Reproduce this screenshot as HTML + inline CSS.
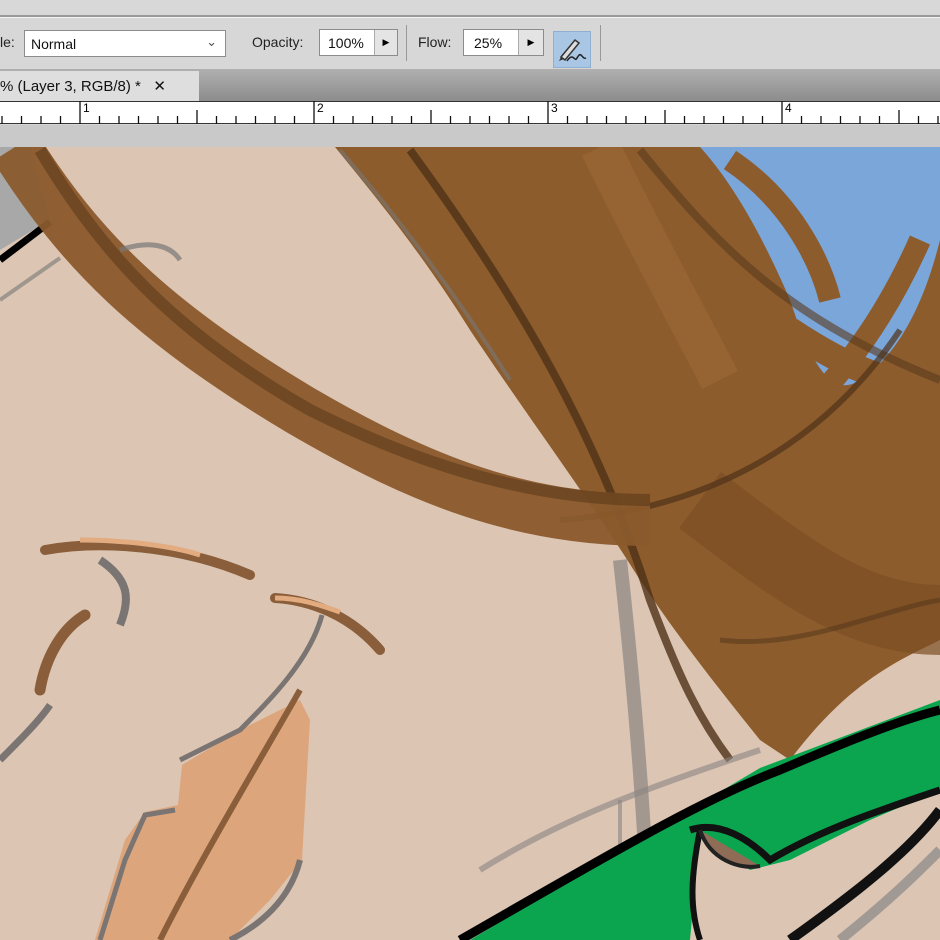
<!DOCTYPE html>
<html><head><meta charset="utf-8"><style>
*{margin:0;padding:0;box-sizing:border-box}
body{width:940px;height:940px;overflow:hidden;background:#d6d6d6;font-family:"Liberation Sans",sans-serif;position:relative}
.abs{position:absolute}
</style></head><body>
<div class="abs" style="left:0;top:0;width:940px;height:15px;background:#d8d8d8"></div>
<div class="abs" style="left:0;top:15px;width:940px;height:2px;background:#9a9a9a"></div>
<div class="abs" style="left:0;top:17px;width:940px;height:1px;background:#f2f2f2"></div>
<div class="abs" style="left:0;top:18px;width:940px;height:51px;background:#d7d7d7"></div>
<div class="abs" style="left:0;top:34px;font-size:14px;color:#222">le:</div>
<div class="abs" style="left:24px;top:30px;width:202px;height:27px;background:#fff;border:1px solid #8c8c8c;font-size:14px;color:#111;padding:5px 0 0 6px">Normal<span style="position:absolute;right:8px;top:3px;color:#555;font-size:13px">&#8964;</span></div>
<div class="abs" style="left:252px;top:34px;font-size:14px;color:#222">Opacity:</div>
<div class="abs" style="left:319px;top:29px;width:79px;height:27px;background:#fff;border:1px solid #8c8c8c;font-size:14px;color:#111;padding:5px 0 0 8px">100%</div>
<div class="abs" style="left:374px;top:30px;width:23px;height:25px;background:#e4e4e4;border-left:1px solid #aaa;font-size:9px;text-align:center;padding-top:7px">&#9654;</div>
<div class="abs" style="left:406px;top:25px;width:1px;height:36px;background:#999"></div>
<div class="abs" style="left:418px;top:34px;font-size:14px;color:#222">Flow:</div>
<div class="abs" style="left:463px;top:29px;width:81px;height:27px;background:#fff;border:1px solid #8c8c8c;font-size:14px;color:#111;padding:5px 0 0 10px">25%</div>
<div class="abs" style="left:518px;top:30px;width:25px;height:25px;background:#e4e4e4;border-left:1px solid #aaa;font-size:9px;text-align:center;padding-top:7px">&#9654;</div>
<div class="abs" style="left:553px;top:31px;width:38px;height:37px;background:#a9c7e4;border:1px solid #8fb0d0"></div>
<svg class="abs" style="left:553px;top:31px" width="38" height="37"><path d="M8 26 L22 9 L26 12 L12 29 Z" fill="#ddd" stroke="#333" stroke-width="1.5"/><path d="M8 26 L6 30 L11 28" fill="#333"/><path d="M14 30 C18 24 20 26 22 28 C24 30 25 22 28 24 C30 26 31 28 33 27" fill="none" stroke="#222" stroke-width="1.5"/></svg>
<div class="abs" style="left:600px;top:25px;width:1px;height:36px;background:#999"></div>
<div class="abs" style="left:0;top:69px;width:940px;height:32px;background:linear-gradient(#b0b0b0,#8c8c8c)"></div>
<div class="abs" style="left:0;top:71px;width:199px;height:30px;background:#dedede;font-size:15px;color:#111;padding:6px 0 0 0">% (Layer 3, RGB/8) *&nbsp;&nbsp;&nbsp;&#10005;</div>
<div class="abs" style="left:0;top:101px;width:940px;height:23px;background:#fff;border-top:1px solid #333;border-bottom:1px solid #333"></div>
<svg class="abs" style="left:0;top:101px" width="940" height="24" id="rl"></svg>
<div class="abs" style="left:83px;top:101px;font-size:12px">1</div>
<div class="abs" style="left:317px;top:101px;font-size:12px">2</div>
<div class="abs" style="left:551px;top:101px;font-size:12px">3</div>
<div class="abs" style="left:785px;top:101px;font-size:12px">4</div>
<div class="abs" style="left:0;top:125px;width:940px;height:22px;background:#c9c9c9"></div>
<svg class="abs" style="left:0;top:0" width="940" height="940" viewBox="0 0 940 940">
<defs><clipPath id="c"><rect x="0" y="147" width="940" height="793"/></clipPath></defs>
<g clip-path="url(#c)">
<rect x="0" y="147" width="940" height="793" fill="#dcc5b3"/>
<polygon points="690,147 940,147 940,520 850,520 800,440 720,260" fill="#7aa6da"/>
<polygon points="0,147 30,147 50,220 0,250" fill="#a8a8a8"/>
<path d="M0 260 L50 222" stroke="#000" stroke-width="7"/>
<path d="M0 300 L60 258" stroke="#777" stroke-width="4" opacity=".6"/>
<path d="M335 147 L700 147 C730 180 760 230 790 300 C810 360 830 400 860 380 C890 360 920 320 940 240 L940 640 C900 660 850 680 790 760 L760 740 C720 690 680 640 640 580 C590 500 530 420 470 330 C420 250 370 190 335 147 Z" fill="#8d5c2d"/>
<path d="M730 160 C790 200 820 260 830 300" stroke="#8d5c2d" stroke-width="22" fill="none"/>
<path d="M790 330 C850 370 900 390 940 380" stroke="#8d5c2d" stroke-width="26" fill="none"/>
<path d="M760 440 C820 410 880 330 920 240" stroke="#8d5c2d" stroke-width="22" fill="none"/>
<path d="M820 520 C870 500 910 480 940 470" stroke="#8d5c2d" stroke-width="40" fill="none"/>
<path d="M700 500 C780 560 850 620 940 620" stroke="#7a4e24" stroke-width="70" fill="none" opacity=".7"/>
<path d="M600 147 C650 250 700 340 720 380" stroke="#a06a38" stroke-width="40" fill="none" opacity=".5"/>
<path d="M410 150 C520 300 600 440 650 600 C680 680 700 720 730 760" stroke="#4f3218" stroke-width="8" fill="none" opacity=".8"/>
<path d="M640 150 C720 250 790 320 940 380" stroke="#5a3a1c" stroke-width="8" fill="none" opacity=".6"/>
<path d="M560 520 C700 510 820 450 900 330" stroke="#4f3218" stroke-width="6" fill="none" opacity=".7"/>
<path d="M720 640 C800 650 880 610 940 600" stroke="#5a3a1c" stroke-width="5" fill="none" opacity=".6"/>
<path d="M340 150 C400 220 460 300 510 380" stroke="#777" stroke-width="4" fill="none" opacity=".6"/>
<path d="M15 147 C80 250 150 320 300 410 C420 480 520 520 650 520" stroke="#8a5a2c" stroke-width="52" fill="none" opacity=".95"/>
<path d="M40 150 C100 250 170 330 310 410 C430 470 540 500 650 500" stroke="#5c3a1a" stroke-width="12" fill="none" opacity=".6"/>
<path d="M120 250 C150 240 170 245 180 260" stroke="#777" stroke-width="5" fill="none" opacity=".7"/>
<path d="M620 560 C630 650 640 760 645 850" stroke="#8a8482" stroke-width="14" fill="none" opacity=".7"/>
<path d="M480 870 C560 820 640 790 760 750" stroke="#8a8482" stroke-width="6" fill="none" opacity=".6"/>
<path d="M620 940 L620 800" stroke="#8a8482" stroke-width="4" fill="none" opacity=".6"/>
<polygon points="470,940 760,768 940,700 940,790 870,820 790,860 750,870 700,830 690,940" fill="#0aa54e"/>
<path d="M460 940 C600 860 700 800 780 770 C850 740 900 720 940 710" stroke="#000" stroke-width="9" fill="none"/>
<path d="M690 830 C720 820 750 840 770 860 C820 830 880 810 940 790" stroke="#111" stroke-width="7" fill="none"/>
<path d="M700 830 C690 880 690 910 700 940" stroke="#111" stroke-width="6" fill="none"/>
<path d="M700 830 C710 860 740 870 760 866" stroke="#222" stroke-width="4" fill="#8f6c56"/>
<path d="M790 940 C860 890 910 850 940 810" stroke="#111" stroke-width="10" fill="none"/>
<path d="M840 940 C890 900 920 870 940 850" stroke="#888" stroke-width="10" fill="none" opacity=".7"/>
<path d="M45 550 C100 540 180 545 250 575" stroke="#8a5e3a" stroke-width="10" fill="none" stroke-linecap="round"/>
<path d="M80 540 C120 540 170 545 200 555" stroke="#e3ab80" stroke-width="5" fill="none"/>
<path d="M100 560 C130 580 130 600 120 625" stroke="#7a7472" stroke-width="8" fill="none"/>
<path d="M40 690 C45 660 60 630 85 615" stroke="#8a5e3a" stroke-width="11" fill="none" stroke-linecap="round"/>
<path d="M0 760 C20 740 40 720 50 705" stroke="#7a7472" stroke-width="7" fill="none"/>
<path d="M275 598 C310 600 350 615 380 650" stroke="#8a5e3a" stroke-width="10" fill="none" stroke-linecap="round"/>
<path d="M275 598 C300 598 320 605 340 612" stroke="#e3ab80" stroke-width="5" fill="none"/>
<polygon points="300,700 310,720 302,860 270,900 230,940 95,940 125,840 145,812 178,805 182,765 240,730" fill="#dca57c"/>
<path d="M322 615 C310 660 270 700 240 730 L180 760" stroke="#7a7472" stroke-width="5" fill="none"/>
<path d="M300 690 C260 760 200 860 160 940" stroke="#8a5e3a" stroke-width="6" fill="none"/>
<path d="M175 810 L145 815 L125 860 L100 940" stroke="#7a7472" stroke-width="5" fill="none"/>
<path d="M300 860 C290 900 260 925 230 940" stroke="#7a7472" stroke-width="6" fill="none"/>
</g></svg>
<script>
var s=document.getElementById('rl'),h='';
for(var i=0;i<60;i++){var x=80+(i-4)*19.5;if(x<0||x>940)continue;var k=((i-4)%12+12)%12;var t=k==0?23:(k==6?14:8);h+='<line x1="'+x+'" y1="'+(23-t)+'" x2="'+x+'" y2="23" stroke="#111" stroke-width="1.3"/>';}
s.innerHTML=h;
</script>
</body></html>
